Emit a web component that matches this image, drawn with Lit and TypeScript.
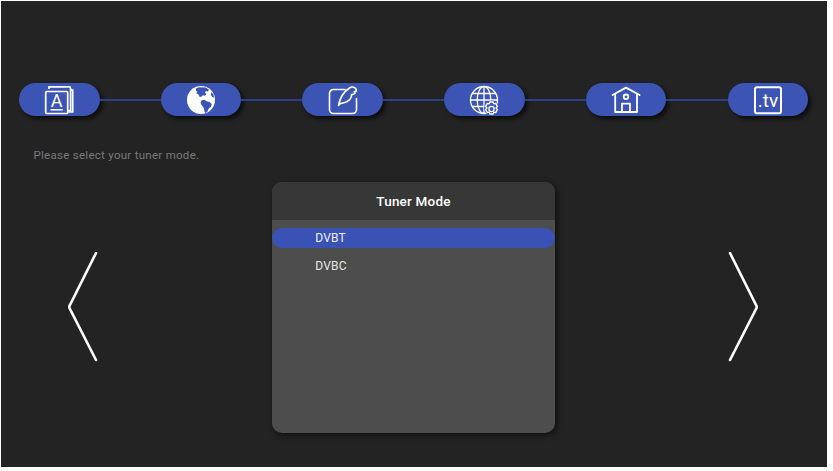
import { LitElement, html, css, svg } from "lit";
import { customElement } from "lit/decorators.js";

const icons = [
  svg`<g fill="none" stroke="#fff" stroke-width="1.7">
    <rect x="1.7" y="6.5" width="22" height="22" rx="1"/>
    <path d="M5 4V1.8H25a1.6 1.6 0 0 1 1.6 1.6V25.6H24"/>
    <path d="M26.6 5.2H28.7V27H24"/>
    <path d="M6.5 24.8H18.8" stroke-width="1.5"/>
  </g>
  <text x="12.7" y="22.4" text-anchor="middle" class="glyph" font-size="18">A</text>`,
  svg`<circle cx="15" cy="15" r="14" fill="#fff"/>
  <path fill="#3c54b4" d="M10 3.6 13 2.2l6.6.3 3.4 2.3-1.2 1.6-2-.4-.8 1.8 1.5 1.2-1.5 1.8-2.2-.6-1.8 1.8-1.8-.4-.5-2.2-2.4-.8 1.1-2L10 6.2z"/>
  <path fill="#3c54b4" d="M15.6 15.2l3-.5 1.9 1.6 3.1.6 2.2 2.2-1 2.8-2.3 1.8-1.3 3.4-2.2 1-.9-3.5-.8-2.6-2-2.2-.7-2.2z"/>
  <path fill="#3c54b4" d="M25.4 7l1.8 2.2 1 3.2-2-.4-1.2-2z"/>`,
  svg`<g fill="none" stroke="#fff" stroke-width="1.6" stroke-linecap="round" stroke-linejoin="round">
    <path d="M17 4.5H5.5a4 4 0 0 0-4 4V24.5a4 4 0 0 0 4 4H24.5a4 4 0 0 0 4-4V13.5"/>
    <path d="M10.5 20.5C11.5 15 14.5 7.5 21.5 3c1.5-1 3-1.2 4.6-.6 1.6.8 2.5 2.2 2.3 3.6l-2.3.8 1 1.2c-1.4 1.5-2.6 1.8-3.6 1.6.2 2.5-1.6 5.5-4.8 7.2-2 1-4.6 1.5-6.2 1.7z"/>
  </g>`,
  svg`<g fill="none" stroke="#fff" stroke-width="1.3">
    <circle cx="15" cy="15" r="13.5"/>
    <ellipse cx="15" cy="15" rx="6.8" ry="13.5"/>
    <path d="M15 1.5V28.5M1.5 15H28.5M3.2 8.5H26.8M3.2 21.5H26.8"/>
  </g>
  <circle cx="22.5" cy="23" r="7.4" fill="#3c54b4"/>
  <g fill="none" stroke="#fff" stroke-width="1.3" stroke-linejoin="round">
    <path d="M20.8 17h3.4l.6 1.9 1.9-.5 1.7 3-1.4 1.6 1.4 1.6-1.7 3-1.9-.5-.6 1.9h-3.4l-.6-1.9-1.9.5-1.7-3 1.4-1.6-1.4-1.6 1.7-3 1.9.5z"/>
    <circle cx="22.5" cy="24" r="2.6"/>
  </g>`,
  svg`<g fill="none" stroke="#fff" stroke-width="1.8" stroke-linejoin="round" stroke-linecap="round">
    <path d="M1.6 10 15 2.6 28.6 10"/>
    <path d="M4.2 9V27H26V9"/>
    <circle cx="15" cy="11.8" r="2.3"/>
    <path d="M11 27V18.6H19V27"/>
  </g>`,
  svg`<rect x="2" y="2.2" width="26" height="26" rx="2" fill="none" stroke="#fff" stroke-width="2"/>
  <text x="15" y="21.6" text-anchor="middle" class="glyph" font-size="19">.tv</text>`,
];

@customElement("app-root")
export class AppRoot extends LitElement {
  static styles = css`
    :host {
      display: block;
      width: 833px;
      height: 471px;
      background: #fff;
      font-family: Roboto, "Liberation Sans", sans-serif;
      padding: 1px 6px 4px 1px;
      box-sizing: border-box;
    }
    .screen {
      height: 100%;
      box-sizing: border-box;
      background: #232323;
      padding: 82px 19px 0 18px;
      display: flex;
      flex-direction: column;
    }
    .steps {
      display: flex;
      align-items: center;
    }
    .pill {
      width: 80.5px;
      height: 33px;
      flex: none;
      border-radius: 17px;
      background: #3c54b4;
      box-shadow: 3px 3px 4px rgba(0, 0, 0, 0.65);
      display: flex;
      align-items: center;
      justify-content: center;
    }
    .pill svg {
      width: 30px;
      height: 30px;
      display: block;
    }
    .glyph {
      fill: #fff;
      font-family: Roboto, sans-serif;
      font-weight: 400;
    }
    .line {
      flex: 1;
      height: 2px;
      background: #2d3f85;
    }
    .prompt {
      margin: 31.5px 0 0 14.5px;
      font-size: 11.5px;
      line-height: 14px;
      letter-spacing: 0.28px;
      color: #7a7a7a;
    }
    .body {
      display: flex;
      align-items: flex-start;
      margin-top: 20.5px;
    }
    .arrow {
      flex: none;
      width: 30px;
      height: 110px;
      margin-top: 70px;
      display: block;
    }
    .arrow.left { margin: 70px 1px 0 49px; }
    .arrow.right { margin-right: 50px; }
    .panel {
      flex: none;
      width: 282.5px;
      height: 251px;
      margin: 0 auto;
      border-radius: 10px;
      background: #4d4d4d;
      box-shadow: 2px 2px 6px rgba(0, 0, 0, 0.6);
      overflow: hidden;
    }
    .title {
      height: 38px;
      background: #373737;
      color: #fff;
      font-size: 13.5px;
      font-weight: 500;
      letter-spacing: 0.2px;
      display: flex;
      align-items: center;
      justify-content: center;
    }
    .list {
      padding-top: 8px;
      display: flex;
      flex-direction: column;
      gap: 7.5px;
    }
    .row {
      height: 20px;
      border-radius: 10px;
      padding-left: 43px;
      color: #e6e6e6;
      font-size: 12px;
      letter-spacing: 0.2px;
      display: flex;
      align-items: center;
    }
    .row.sel {
      background: #3a51b5;
      color: #f0f2ff;
    }
  `;

  render() {
    const steps: unknown[] = [];
    icons.forEach((icon, i) => {
      if (i) steps.push(html`<div class="line"></div>`);
      steps.push(html`<div class="pill"><svg viewBox="0 0 30 30">${icon}</svg></div>`);
    });
    return html`
      <div class="screen">
        <div class="steps">${steps}</div>
        <div class="prompt">Please select your tuner mode.</div>
        <div class="body">
          <svg class="arrow left" viewBox="0 0 30 110"><polyline points="28,1 1,55 28,108" fill="none" stroke="#fff" stroke-width="2.6" stroke-linecap="round" stroke-linejoin="miter"/></svg>
          <div class="panel">
            <div class="title">Tuner Mode</div>
            <div class="list">
              <div class="row sel">DVBT</div>
              <div class="row">DVBC</div>
            </div>
          </div>
          <svg class="arrow right" viewBox="0 0 30 110"><polyline points="2,1 29,55 2,108" fill="none" stroke="#fff" stroke-width="2.6" stroke-linecap="round" stroke-linejoin="miter"/></svg>
        </div>
      </div>
    `;
  }
}
